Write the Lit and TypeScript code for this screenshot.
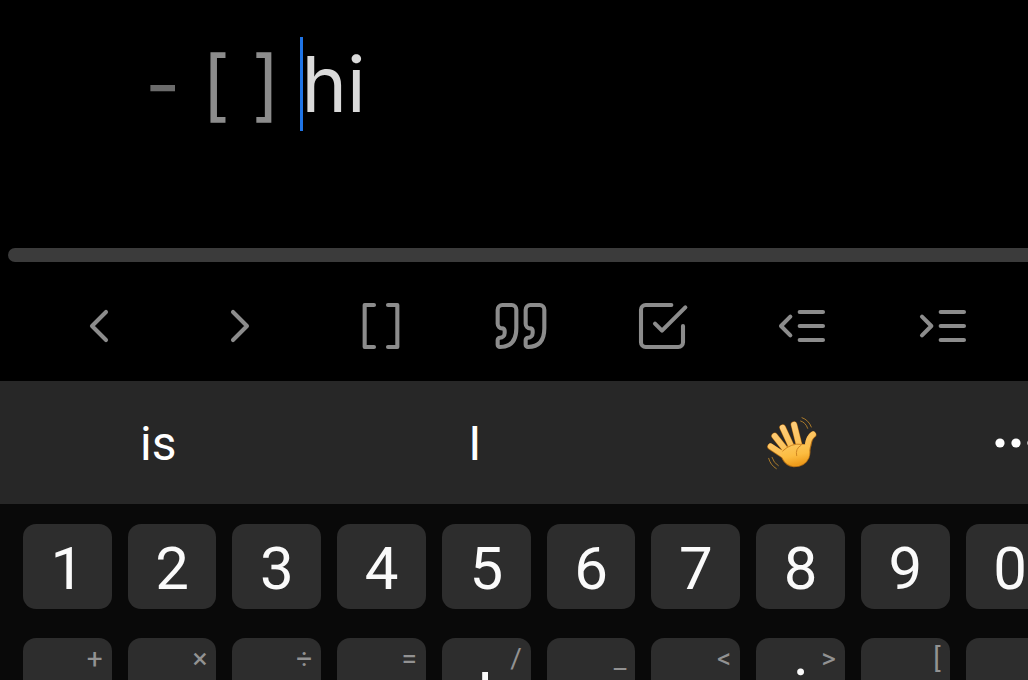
import { LitElement, html, css, svg } from "lit";
import { customElement } from "lit/decorators.js";

const tools = [
  { name: "Cursor left", art: svg`<path d="m15 18-6-6 6-6"/>` },
  { name: "Cursor right", art: svg`<path d="m9 18 6-6-6-6"/>` },
  { name: "Brackets", art: svg`<path d="M15 3h4v18h-4M9 21H5V3h4"/>` },
  {
    name: "Quote",
    art: svg`<path d="M16 3a2 2 0 0 0-2 2v6a2 2 0 0 0 2 2 1 1 0 0 1 1 1v1a2 2 0 0 1-2 2 1 1 0 0 0-1 1v2a1 1 0 0 0 1 1c3 0 7-1 7-8V5a2 2 0 0 0-2-2z"/><path d="M4 3a2 2 0 0 0-2 2v6a2 2 0 0 0 2 2 1 1 0 0 1 1 1v1a2 2 0 0 1-2 2 1 1 0 0 0-1 1v2a1 1 0 0 0 1 1c3 0 7-1 7-8V5a2 2 0 0 0-2-2z"/>`,
  },
  {
    name: "Checklist",
    art: svg`<path d="m9 11 3 3L22 4"/><path d="M21 12v7a2 2 0 0 1-2 2H5a2 2 0 0 1-2-2V5a2 2 0 0 1 2-2h11"/>`,
  },
  { name: "Outdent", art: svg`<path d="M21 12H11M21 18H11M21 6H11M7 8l-4 4 4 4"/>` },
  { name: "Indent", art: svg`<path d="M21 12H11M21 18H11M21 6H11M3 8l4 4-4 4"/>` },
];

const digits = ["1", "2", "3", "4", "5", "6", "7", "8", "9", "0"];
const letters = [
  ["q", "+"], ["w", "×"], ["e", "÷"], ["r", "="], ["t", "/"],
  ["y", "_"], ["u", "<"], ["i", ">"], ["o", "["], ["p", "]"],
];

const wave = svg`
  <defs>
    <linearGradient id="skin" x1="0" y1="0" x2="0.3" y2="1">
      <stop offset="0" stop-color="#fcc860"/>
      <stop offset="0.6" stop-color="#fcbc40"/>
      <stop offset="1" stop-color="#ee9c1c"/>
    </linearGradient>
    <linearGradient id="finger" gradientUnits="userSpaceOnUse" x1="80" y1="40" x2="110" y2="130">
      <stop offset="0" stop-color="#ffcf80"/>
      <stop offset="1" stop-color="#fcbf50"/>
    </linearGradient>
  </defs>
  <g fill="none" stroke-linecap="round" stroke-linejoin="round">
    <g stroke="#b06c14" stroke-width="20">
      <path d="M44 116 86 144M56 84 96 134M80 59 112 128M114 50 132 122"/>
      <path d="M171 80Q160 88 157 110L148 140"/>
    </g>
    <path fill="#b06c14" d="M70 128Q98 104 132 107L162 109Q166 134 160 150Q148 178 113 178Q89 175 78 154Z"/>
    <g stroke="url(#finger)" stroke-width="17">
      <path d="M44 115 86 143M56 84 96 134M80 59 112 128M114 50 132 122"/>
      <path d="M171 79Q158 88 155 110L147 138"/>
    </g>
    <path fill="url(#skin)" d="M73 130Q98 108 132 109L158 111Q163 134 158 149Q146 175 113 175Q91 172 81 153Z"/>
    <path stroke="#cf8522" stroke-width="3" d="M80 129Q106 104 137 109M135 112Q117 122 122 143"/>
    <path stroke="#a97929" stroke-width="3" d="M134 39Q149 43 155 61M138 29Q158 36 166 57M48 148Q53 165 67 173M38 151Q43 171 61 182"/>
  </g>`;

@customElement("app-root")
export class AppRoot extends LitElement {
  static styles = css`
    :host {
      display: flex;
      flex-direction: column;
      height: 100vh;
      overflow: hidden;
      background: #000;
      color: #fff;
      font-family: Roboto, "Noto Sans", sans-serif;
    }
    * { box-sizing: border-box; }
    button, input {
      margin: 0;
      padding: 0;
      border: 0;
      background: none;
      color: inherit;
      font: inherit;
    }
    svg { display: block; }
    .editor {
      display: flex;
      padding: 37px 0 117px 145px;
      font: 77px/94px Inter, sans-serif;
      white-space: pre;
    }
    .dash { color: #6b6b6b; }
    .task { color: #8c8c8c; }
    .field { position: relative; flex: 1; display: flex; }
    .field input {
      width: 100%;
      height: 94px;
      color: #dadada;
      outline: none;
    }
    .caret {
      position: absolute;
      top: 0;
      bottom: 0;
      left: -2px;
      width: 3px;
      background: #1f74e6;
    }
    .scroll {
      flex: none;
      height: 14px;
      margin-left: 8px;
      border-radius: 7px 0 0 7px;
      background: #3b3b3b;
    }
    .tools, .suggest, .keys {
      display: grid;
      flex: none;
      width: 105%;
    }
    .tools {
      grid-template-columns: repeat(7, 1fr);
      padding: 36px 66px 27px 29px;
      color: #8c8c8c;
    }
    .tools button { display: grid; justify-items: center; }
    .tools svg {
      width: 56px;
      height: 56px;
      fill: none;
      stroke: currentColor;
      stroke-width: 1.75;
      stroke-linecap: round;
      stroke-linejoin: round;
    }
    .suggest {
      grid-template-columns: repeat(3, 1fr) 130px;
      height: 123px;
      background: #272727;
      font-size: 48px;
      line-height: 56px;
    }
    .suggest button { display: grid; place-items: center; }
    .suggest .word { padding-top: 2px; }
    .suggest .more { padding-left: 4px; }
    .wave { width: 70px; height: 70px; }
    .dots { width: 44px; height: 12px; fill: #fff; }
    .keyboard { flex: 1 0 auto; background: #090909; }
    .keys {
      grid-template-columns: repeat(10, 1fr);
      gap: 29px 16px;
      padding: 20px 25px 20px 23px;
      font-size: 60px;
      line-height: 70px;
    }
    .key {
      position: relative;
      height: 85px;
      padding-top: 5px;
      border-radius: 13px;
      background: #2d2d2d;
      color: #fafafa;
    }
    .letter { height: 106px; font-size: 64px; }
    .alt {
      position: absolute;
      top: 5px;
      right: 9px;
      color: #929292;
      font-size: 28px;
      line-height: 32px;
    }
  `;

  render() {
    return html`
      <div class="editor">
        <span class="dash">- </span><span class="task">[ ] </span>
        <label class="field">
          <input type="text" aria-label="Task" .value=${"hi"} />
          <span class="caret"></span>
        </label>
      </div>
      <div class="scroll"></div>
      <nav class="tools" aria-label="Formatting">
        ${tools.map((t) => html`<button aria-label=${t.name}><svg viewBox="0 0 24 24">${t.art}</svg></button>`)}
      </nav>
      <div class="suggest">
        <button class="word">is</button>
        <button class="word">I</button>
        <button aria-label="Waving hand"><svg class="wave" viewBox="0 0 210 210">${wave}</svg></button>
        <button class="more" aria-label="More">
          <svg class="dots" viewBox="0 0 44 12">
            <circle cx="6" cy="6" r="4.6"/><circle cx="22" cy="6" r="4.6"/><circle cx="38" cy="6" r="4.6"/>
          </svg>
        </button>
      </div>
      <div class="keyboard">
        <div class="keys">
          ${digits.map((d) => html`<button class="key">${d}</button>`)}
          ${letters.map(([l, a]) => html`<button class="key letter">${l}<span class="alt">${a}</span></button>`)}
        </div>
      </div>
    `;
  }
}
